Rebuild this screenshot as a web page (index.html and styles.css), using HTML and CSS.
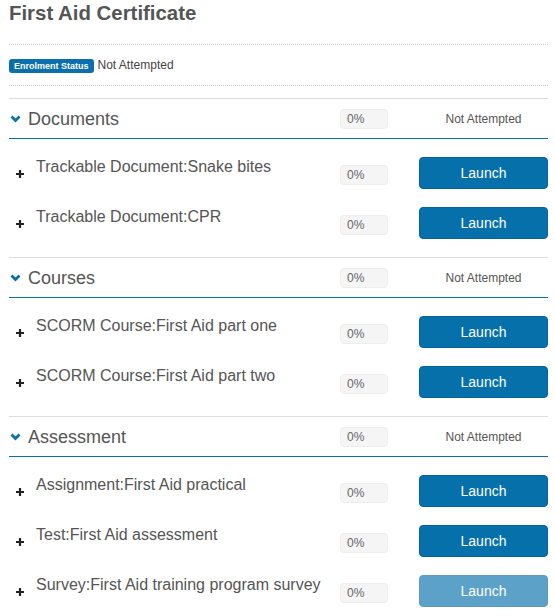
FILE: index.html
```html
<!DOCTYPE html>
<html>
<head>
<meta charset="utf-8">
<link rel="stylesheet" href="styles.css">
</head>
<body>
<div class="page">
  <h1 class="title">First Aid Certificate</h1>
  <div class="status-row">
    <span class="badge">Enrolment Status</span>
    <span class="status-text">Not Attempted</span>
  </div>

  <div class="section">
    <div class="section-head">
      <svg class="chev" width="11" height="8" viewBox="0 0 11 8"><polyline points="1.5,1.5 5.5,5.5 9.5,1.5" fill="none" stroke="#0a6fad" stroke-width="2.8"/></svg>
      <span class="section-name">Documents</span>
      <span class="progress">0%</span>
      <span class="section-status">Not Attempted</span>
    </div>
    <div class="items">
      <div class="item">
        <svg class="plus" width="8" height="8" viewBox="0 0 8 8"><path d="M4 0V8M0 4H8" stroke="#222" stroke-width="2.2"/></svg>
        <span class="item-name">Trackable Document:Snake bites</span>
        <span class="progress progress-item">0%</span>
        <button class="launch">Launch</button>
      </div>
      <div class="item">
        <svg class="plus" width="8" height="8" viewBox="0 0 8 8"><path d="M4 0V8M0 4H8" stroke="#222" stroke-width="2.2"/></svg>
        <span class="item-name">Trackable Document:CPR</span>
        <span class="progress progress-item">0%</span>
        <button class="launch">Launch</button>
      </div>
    </div>
  </div>

  <div class="section">
    <div class="section-head">
      <svg class="chev" width="11" height="8" viewBox="0 0 11 8"><polyline points="1.5,1.5 5.5,5.5 9.5,1.5" fill="none" stroke="#0a6fad" stroke-width="2.8"/></svg>
      <span class="section-name">Courses</span>
      <span class="progress">0%</span>
      <span class="section-status">Not Attempted</span>
    </div>
    <div class="items">
      <div class="item">
        <svg class="plus" width="8" height="8" viewBox="0 0 8 8"><path d="M4 0V8M0 4H8" stroke="#222" stroke-width="2.2"/></svg>
        <span class="item-name">SCORM Course:First Aid part one</span>
        <span class="progress progress-item">0%</span>
        <button class="launch">Launch</button>
      </div>
      <div class="item">
        <svg class="plus" width="8" height="8" viewBox="0 0 8 8"><path d="M4 0V8M0 4H8" stroke="#222" stroke-width="2.2"/></svg>
        <span class="item-name">SCORM Course:First Aid part two</span>
        <span class="progress progress-item">0%</span>
        <button class="launch">Launch</button>
      </div>
    </div>
  </div>

  <div class="section">
    <div class="section-head">
      <svg class="chev" width="11" height="8" viewBox="0 0 11 8"><polyline points="1.5,1.5 5.5,5.5 9.5,1.5" fill="none" stroke="#0a6fad" stroke-width="2.8"/></svg>
      <span class="section-name">Assessment</span>
      <span class="progress">0%</span>
      <span class="section-status">Not Attempted</span>
    </div>
    <div class="items">
      <div class="item">
        <svg class="plus" width="8" height="8" viewBox="0 0 8 8"><path d="M4 0V8M0 4H8" stroke="#222" stroke-width="2.2"/></svg>
        <span class="item-name">Assignment:First Aid practical</span>
        <span class="progress progress-item">0%</span>
        <button class="launch">Launch</button>
      </div>
      <div class="item">
        <svg class="plus" width="8" height="8" viewBox="0 0 8 8"><path d="M4 0V8M0 4H8" stroke="#222" stroke-width="2.2"/></svg>
        <span class="item-name">Test:First Aid assessment</span>
        <span class="progress progress-item">0%</span>
        <button class="launch">Launch</button>
      </div>
      <div class="item">
        <svg class="plus" width="8" height="8" viewBox="0 0 8 8"><path d="M4 0V8M0 4H8" stroke="#222" stroke-width="2.2"/></svg>
        <span class="item-name">Survey:First Aid training program survey</span>
        <span class="progress progress-item">0%</span>
        <button class="launch launch-disabled">Launch</button>
      </div>
    </div>
  </div>
</div>
</body>
</html>
```

FILE: styles.css
```css
html, body {
  margin: 0;
  padding: 0;
  background: #fff;
}
body {
  font-family: "Liberation Sans", Arial, sans-serif;
  color: #555;
}
.page {
  width: 539px;
  margin-left: 9px;
}
.title {
  margin: 0;
  padding-top: 1px;
  font-size: 20.4px;
  line-height: 24px;
  font-weight: bold;
  color: #555;
  margin-bottom: 19px;
}
.status-row {
  border-top: 1px dotted #ccc;
  border-bottom: 1px dotted #ccc;
  height: 40px;
  margin-bottom: 12px;
  display: flex;
  align-items: flex-start;
}
.badge {
  margin-top: 14px;
  display: inline-block;
  height: 14px;
  line-height: 14px;
  padding: 0 5px;
  border-radius: 3px;
  background: #0a6fad;
  color: #fff;
  font-size: 9px;
  font-weight: bold;
  white-space: nowrap;
}
.status-text {
  margin-top: 13px;
  margin-left: 4px;
  font-size: 12px;
  line-height: 14px;
  color: #444;
}
.section-head {
  border-top: 1px solid #ddd;
  border-bottom: 1px solid #0a6fad;
  height: 39px;
  display: flex;
  align-items: center;
}
.chev {
  margin-left: 1px;
  margin-right: 7px;
  margin-top: 1px;
  flex: none;
}
.section-name {
  flex: 1;
  font-size: 18px;
  line-height: 20px;
  color: #555;
}
.progress {
  flex: none;
  box-sizing: border-box;
  width: 48px;
  height: 20px;
  line-height: 18px;
  padding-left: 6px;
  font-size: 12px;
  color: #666;
  background: #f5f5f5;
  border: 1px solid #eee;
  border-radius: 4px;
}
.section-status {
  flex: none;
  width: 129px;
  margin-left: 31px;
  text-align: center;
  font-size: 12px;
  color: #555;
}
.items {
  padding: 18px 0;
  display: flex;
  flex-direction: column;
  gap: 18px;
}
.item {
  display: flex;
  align-items: flex-start;
  height: 32px;
}
.plus {
  flex: none;
  margin-left: 7px;
  margin-top: 13px;
  margin-right: 12px;
}
.item-name {
  flex: 1;
  font-size: 16px;
  line-height: 20px;
  color: #555;
  white-space: nowrap;
}
.progress-item {
  margin-top: 8px;
}
.launch {
  flex: none;
  width: 129px;
  height: 32px;
  margin-left: 31px;
  padding: 0;
  border: 1px solid #0a629a;
  border-radius: 4px;
  background: #0670ab;
  color: #fff;
  font-family: "Liberation Sans", Arial, sans-serif;
  font-size: 14px;
  line-height: 30px;
  cursor: pointer;
}
.launch-disabled {
  opacity: 0.65;
  cursor: not-allowed;
}
```
